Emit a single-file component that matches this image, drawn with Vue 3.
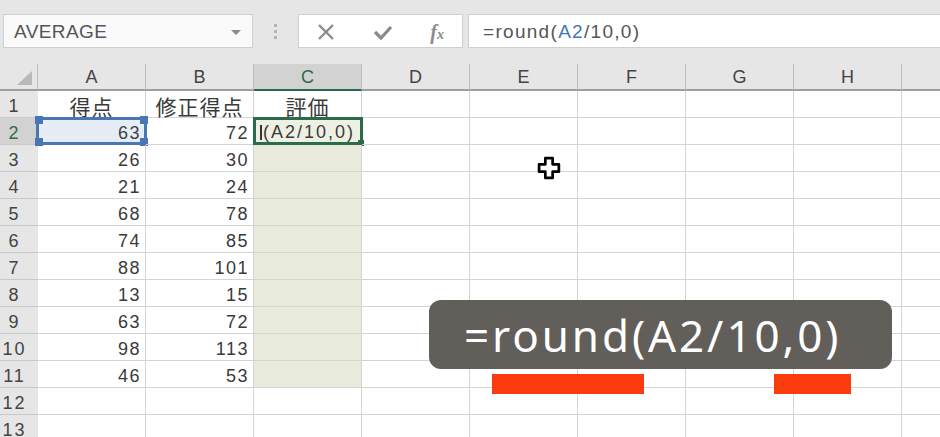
<script setup>
const columns = ['A', 'B', 'C', 'D', 'E', 'F', 'G', 'H']
const scores = [
  [63, 72], [26, 30], [21, 24], [68, 78], [74, 85],
  [88, 101], [13, 15], [63, 72], [98, 113], [46, 53]
]
const rows = Array.from({ length: 13 }, (_, i) => i + 1)
const valueOf = (row, col) => {
  if (row < 2 || row > 11 || col > 1) return ''
  return scores[row - 2][col]
}
const headingOf = (col) => ['得点', '修正得点', '評価'][col] || ''
const isGreen = (row, col) => col === 2 && row >= 3 && row <= 11
</script>

<template>
  <div class="app">
    <div class="toolbar">
      <div class="box name-box">
        <span>AVERAGE</span>
        <i class="caret"></i>
      </div>
      <div class="grip"><b></b><b></b><b></b></div>
      <div class="box buttons">
        <svg class="btn" width="18" height="16" viewBox="0 0 18 16"><path d="M2 1 16 15M16 1 2 15" stroke="#8a8a8a" stroke-width="2.4" fill="none"/></svg>
        <svg class="btn" width="20" height="16" viewBox="0 0 20 16"><path d="M2 8 8 14 18 3" stroke="#8a8a8a" stroke-width="3.2" fill="none"/></svg>
        <span class="fx">f<small>x</small></span>
      </div>
      <div class="box formula">=round(<span class="ref">A2</span>/10,0)</div>
    </div>

    <div class="sheet">
      <div class="corner"><i></i></div>
      <div v-for="(c, i) in columns" :key="c" class="col-head" :class="{ active: i === 2 }">{{ c }}</div>
      <div class="col-head tail"></div>

      <template v-for="r in rows" :key="r">
        <div class="row-head" :class="{ active: r === 2 }"><span>{{ r }}</span></div>
        <div
          v-for="(c, i) in columns"
          :key="c"
          class="cell"
          :class="{ green: isGreen(r, i), head: r === 1 }"
        >
          <template v-if="r === 1">{{ headingOf(i) }}</template>
          <template v-else>{{ valueOf(r, i) }}</template>
          <template v-if="r === 2 && i === 0">
            <span class="range">
              <i class="h tl"></i><i class="h tr"></i><i class="h bl"></i><i class="h br"></i>
            </span>
          </template>
          <template v-if="r === 2 && i === 2">
            <span class="editing"><span class="ibeam"></span>(A2/10,0)<i class="fill"></i></span>
          </template>
        </div>
        <div class="cell tail"></div>
      </template>

      <svg class="cursor" width="25" height="25" viewBox="0 0 24 24">
        <path d="M8 2h7v6h6v7h-6v6H8v-6H2V8h6z" fill="#fff" stroke="#000" stroke-width="2.6" stroke-linejoin="round"/>
      </svg>
    </div>

    <div class="callout">=round(A2/10,0)</div>
    <div class="bar bar-a"></div>
    <div class="bar bar-b"></div>
  </div>
</template>

<style scoped>
.app {
  position: relative;
  width: 940px;
  height: 437px;
  overflow: hidden;
  background: #fff;
  font-family: "Liberation Sans", Arial, sans-serif;
  color: #3a3a3a;
}
.toolbar {
  height: 64px;
  box-sizing: border-box;
  padding: 14px 0 16px 3px;
  display: flex;
  background: #e6e6e6;
}
.box {
  box-sizing: border-box;
  height: 34px;
  padding-top: 2px;
  background: #fff;
  border: 1px solid #cfcfcf;
  display: flex;
  align-items: center;
}
.name-box {
  width: 250px;
  padding-left: 10px;
  padding-right: 10px;
  justify-content: space-between;
  font-size: 19px;
  letter-spacing: 0.4px;
  color: #555;
  background: #fafafa;
}
.caret {
  width: 0;
  height: 0;
  margin-right: 1px;
  border-left: 5px solid transparent;
  border-right: 5px solid transparent;
  border-top: 5px solid #8c8c8c;
}
.grip {
  width: 45px;
  display: flex;
  flex-direction: column;
  align-items: center;
  justify-content: center;
  gap: 3px;
}
.grip b {
  width: 3px;
  height: 3px;
  background: #b5b5b5;
}
.buttons {
  width: 165px;
  padding-left: 18px;
  padding-right: 18px;
  justify-content: space-between;
}
.fx {
  font-family: "Liberation Serif", serif;
  font-style: italic;
  font-weight: bold;
  font-size: 20px;
  color: #8a8a8a;
}
.fx small {
  font-size: 14px;
}
.formula {
  flex: 1;
  margin-left: 5px;
  padding-left: 14px;
  font-size: 19px;
  letter-spacing: 1.3px;
  color: #555;
  white-space: pre;
  border-right: 0;
}
.ref {
  color: #3f78b8;
}
.sheet {
  position: relative;
  display: grid;
  grid-template-columns: 38px repeat(8, 108px) 38px;
  grid-template-rows: 27px repeat(13, 27px);
}
.corner,
.col-head,
.row-head {
  box-sizing: border-box;
  background: #e6e6e6;
  color: #444;
}
.corner {
  position: relative;
  border-bottom: 2px solid #9e9e9e;
  border-right: 1px solid #bdbdbd;
}
.corner i {
  position: absolute;
  right: 5px;
  bottom: 4px;
  width: 0;
  height: 0;
  border-left: 15px solid transparent;
  border-bottom: 14px solid #b9b9b9;
}
.col-head {
  display: flex;
  align-items: center;
  justify-content: center;
  padding-top: 2px;
  font-size: 18px;
  border-right: 1px solid #bdbdbd;
  border-bottom: 2px solid #9e9e9e;
}
.col-head.tail {
  border-right: 0;
}
.col-head.active {
  background: #d2d2d2;
  color: #2f6b4a;
  border-bottom: 2px solid #2a6b4a;
}
.row-head {
  display: flex;
  align-items: center;
  padding-top: 5px;
  font-size: 18px;
  letter-spacing: 2px;
  border-bottom: 1px solid #c9c9c9;
}
.row-head span {
  width: 29px;
  text-align: center;
}
.row-head.active {
  background: #d2d2d2;
  color: #2f6b4a;
}
.cell {
  position: relative;
  box-sizing: border-box;
  display: flex;
  align-items: center;
  justify-content: flex-end;
  padding: 5px 4px 0 0;
  font-size: 18px;
  letter-spacing: 1.5px;
  color: #3a3a3a;
  border-right: 1px solid #d4d4d4;
  border-bottom: 1px solid #d4d4d4;
}
.cell.tail {
  border-right: 0;
}
.cell.green {
  background: #e8ebdc;
}
.cell.head {
  justify-content: center;
  align-items: flex-start;
  padding: 0;
  font-family: "Noto Sans CJK JP", sans-serif;
  font-size: 21px;
  line-height: 30px;
  letter-spacing: 1px;
}
.range {
  position: absolute;
  inset: -1px -2px -1px -2px;
  background: rgba(68, 114, 196, 0.13);
  border: 3px solid #4a77b4;
}
.h {
  position: absolute;
  width: 8px;
  height: 8px;
  background: #4a77b4;
}
.tl { left: -4px; top: -4px; }
.tr { right: -4px; top: -4px; }
.bl { left: -4px; bottom: -4px; }
.br { right: -4px; bottom: -4px; }
.editing {
  position: absolute;
  inset: -1px -2px -1px -1px;
  box-sizing: border-box;
  display: flex;
  align-items: center;
  padding: 3px 0 0 4px;
  background: #eef0e4;
  border: 3px solid #2a6b4a;
  font-size: 18px;
  letter-spacing: 2px;
  white-space: nowrap;
}
.ibeam {
  width: 2px;
  height: 15px;
  margin-right: 1px;
  background: #333;
}
.fill {
  position: absolute;
  right: -4px;
  bottom: -4px;
  width: 6px;
  height: 6px;
  background: #2a6b4a;
}
.cursor {
  position: absolute;
  left: 537px;
  top: 92px;
}
.callout {
  position: absolute;
  left: 429px;
  top: 300px;
  width: 463px;
  height: 69px;
  box-sizing: border-box;
  padding-left: 35px;
  display: flex;
  align-items: center;
  border-radius: 12px;
  background: rgba(88, 84, 79, 0.94);
  color: #fff;
  font-family: "Noto Sans", sans-serif;
  font-size: 44px;
  letter-spacing: 2.9px;
  white-space: nowrap;
}
.bar {
  position: absolute;
  top: 374px;
  height: 20px;
  background: #fb3a0e;
}
.bar-a {
  left: 492px;
  width: 152px;
}
.bar-b {
  left: 774px;
  width: 77px;
}
</style>
